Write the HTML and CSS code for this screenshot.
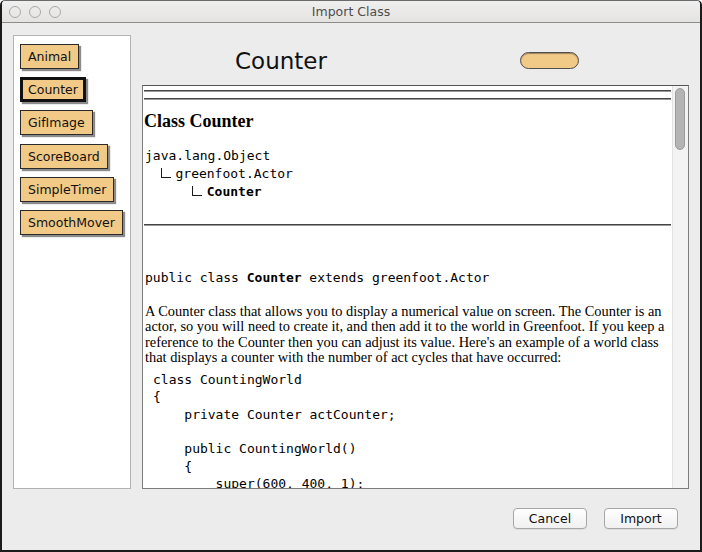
FILE: index.html
```html
<!DOCTYPE html>
<html>
<head>
<meta charset="utf-8">
<title>Import Class</title>
<link rel="stylesheet" href="styles.css">
</head>
<body>
<div class="window">
  <div class="titlebar">
    <div class="lights"><span class="light"></span><span class="light"></span><span class="light"></span></div>
    <div class="title">Import Class</div>
    <div></div>
  </div>
  <div class="main">
    <div class="classlist">
      <div class="cls">Animal</div>
      <div class="cls selected">Counter</div>
      <div class="cls">GifImage</div>
      <div class="cls">ScoreBoard</div>
      <div class="cls">SimpleTimer</div>
      <div class="cls">SmoothMover</div>
    </div>
    <div class="detail">
      <div class="header">
        <div class="cname">Counter</div>
        <div class="pill"></div>
      </div>
      <div class="docbox">
        <div class="doc">
          <div class="rule first"></div>
          <div class="rule second"></div>
          <h2 class="classtitle">Class Counter</h2>
          <div class="tree">
            <div class="tline">java.lang.Object</div>
            <div class="tline lvl1"><span class="branch"></span><span>greenfoot.Actor</span></div>
            <div class="tline lvl2"><span class="branch"></span><b>Counter</b></div>
          </div>
          <div class="rule third"></div>
          <div class="sig">public class <b>Counter</b> extends greenfoot.Actor</div>
          <p class="desc">A Counter class that allows you to display a numerical value on screen. The Counter is an actor, so you will need to create it, and then add it to the world in Greenfoot. If you keep a reference to the Counter then you can adjust its value. Here's an example of a world class that displays a counter with the number of act cycles that have occurred:</p>
          <div class="code">class CountingWorld
{
    private Counter actCounter;

    public CountingWorld()
    {
        super(600, 400, 1);
        actCounter = new Counter("Act Cycles: ");
        addObject(actCounter, 100, 100);
    }
}</div>
        </div>
        <div class="scrollbar"><div class="thumb"></div></div>
      </div>
    </div>
  </div>
  <div class="footer">
    <button class="btn">Cancel</button>
    <button class="btn">Import</button>
  </div>
</div>
</body>
</html>
```

FILE: styles.css
```css
html, body {
  margin: 0;
  padding: 0;
  background: #ffffff;
}

.window {
  width: 702px;
  height: 552px;
  box-sizing: border-box;
  border: 2px solid #1b1b1b;
  border-top: 1px solid #6b6b6b;
  border-radius: 5px 5px 0 0;
  background: #ececec;
  display: flex;
  flex-direction: column;
  overflow: hidden;
  font-family: "DejaVu Sans", sans-serif;
}

.titlebar {
  height: 21px;
  flex: none;
  border-bottom: 1px solid #8c8c8c;
  background: linear-gradient(#efefef, #e4e3e1);
  display: grid;
  grid-template-columns: 1fr auto 1fr;
  align-items: center;
}

.lights {
  display: flex;
  gap: 8px;
  padding-left: 7px;
}

.light {
  width: 12px;
  height: 12px;
  box-sizing: border-box;
  border: 1px solid #a9a9a9;
  border-radius: 50%;
}

.title {
  font-size: 12.5px;
  color: #4d4d4d;
}

.main {
  height: 466px;
  box-sizing: border-box;
  flex: none;
  display: flex;
  gap: 11px;
  padding: 12px 11px 0 11px;
}

.classlist {
  width: 118px;
  box-sizing: border-box;
  border: 1px solid #b3b3b3;
  background: #ffffff;
  padding: 8px 0 0 6px;
  display: flex;
  flex-direction: column;
  align-items: flex-start;
  gap: 8.2px;
}

.cls {
  height: 25px;
  box-sizing: border-box;
  border: 1px solid #2a2a2a;
  background: #f2ca88;
  padding: 0 7px;
  font-size: 12.5px;
  line-height: 23px;
  color: #111111;
  box-shadow: 2px 2px 1px rgba(0, 0, 0, 0.45);
}

.cls.selected {
  border: 3px solid #111111;
  padding: 0 5px;
  line-height: 19px;
}

.detail {
  width: 547px;
  display: flex;
  flex-direction: column;
}

.header {
  height: 50px;
  box-sizing: border-box;
  padding-top: 13px;
  display: grid;
  grid-template-columns: 278px 259px;
  justify-items: center;
  align-items: start;
}

.cname {
  font-size: 23px;
  line-height: 27px;
  color: #111111;
}

.pill {
  width: 59px;
  height: 17px;
  box-sizing: border-box;
  margin-top: 4px;
  border: 1px solid #4f4f4f;
  border-radius: 9px;
  background: #f2ca88;
  box-shadow: inset 0 1px 1px rgba(0, 0, 0, 0.35);
}

.docbox {
  height: 404px;
  box-sizing: border-box;
  border: 1px solid #7d7d7d;
  border-top-color: #555555;
  background: #ffffff;
  display: flex;
}

.doc {
  flex: 1;
  overflow: hidden;
  padding: 0 0 0 2px;
  color: #000000;
}

.rule {
  height: 0;
  border-top: 1px solid #444444;
  border-bottom: 1px solid #9a9a9a;
  margin: 0 1px 0 -1px;
}

.rule.first { margin-top: 4px; }
.rule.second { margin-top: 6px; }
.rule.third { margin-top: 23.5px; }

.classtitle {
  font: bold 18px/21px "Liberation Serif", serif;
  margin: 11px 0 0 -1px;
}

.tree {
  font: 13px/18px "DejaVu Sans Mono", monospace;
  margin-top: 14.5px;
}

.tline {
  height: 18px;
  white-space: nowrap;
}

.tline.lvl1 { padding-left: 15.7px; }
.tline.lvl2 { padding-left: 47px; }

.branch {
  display: inline-block;
  width: 10px;
  height: 10px;
  box-sizing: border-box;
  border-left: 1px solid #1a1a1a;
  border-bottom: 1px solid #1a1a1a;
  margin-right: 4.8px;
}

.sig {
  font: 13px/18px "DejaVu Sans Mono", monospace;
  margin-top: 43.2px;
  white-space: pre;
}

.desc {
  font: 14.4px/15.4px "Liberation Serif", serif;
  margin: 16.9px 0 0 0;
}

.code {
  font: 13px/17.4px "DejaVu Sans Mono", monospace;
  margin: 5.1px 0 0 8px;
  white-space: pre;
}

.scrollbar {
  width: 16px;
  box-sizing: border-box;
  border-left: 1px solid #e2e2e2;
  background: #f3f3f3;
  padding: 2px 0 0 2px;
}

.thumb {
  width: 10px;
  height: 62px;
  box-sizing: border-box;
  border: 1px solid #9c9c9c;
  border-radius: 5px;
  background: #b4b4b4;
}

.footer {
  flex: 1;
  display: flex;
  justify-content: flex-end;
  align-items: flex-start;
  gap: 17px;
  padding: 19px 22px 0 0;
}

.btn {
  width: 74px;
  height: 21px;
  box-sizing: border-box;
  border: 1px solid #a6a6a6;
  border-radius: 4px;
  background: linear-gradient(#ffffff, #f0f0f0);
  font: 12.5px "DejaVu Sans", sans-serif;
  color: #111111;
  padding: 0;
  box-shadow: 0 1px 0 rgba(0, 0, 0, 0.06);
}
```
